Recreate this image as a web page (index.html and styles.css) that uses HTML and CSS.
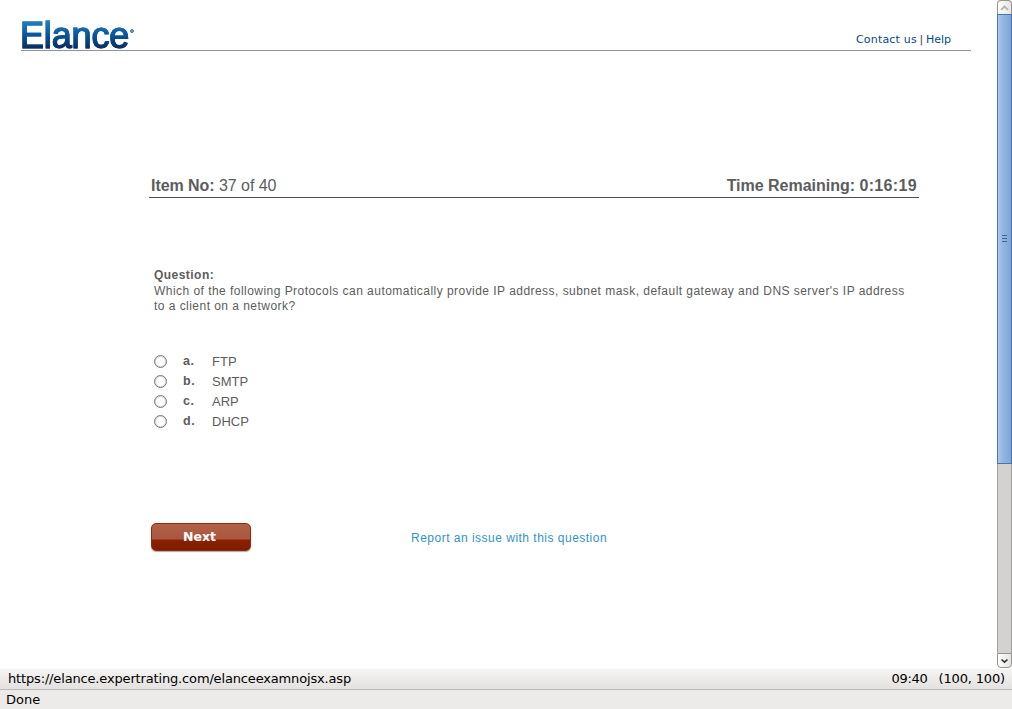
FILE: index.html
```html
<!DOCTYPE html>
<html lang="en">
<head>
<meta charset="utf-8">
<title>Elance</title>
<link rel="stylesheet" href="styles.css">
</head>
<body>
<div class="viewport">
  <main class="page">
    <header class="header">
      <div class="logo"><span class="logo-text">Elance</span><span class="logo-dot"></span></div>
      <nav class="links"><a>Contact us</a><span class="sep">|</span><a class="help">Help</a></nav>
    </header>
    <section class="exam">
      <div class="exam-bar">
        <div class="item"><b>Item No:</b> <span class="count">37 of 40</span></div>
        <div class="time">Time Remaining: <span class="digits">0:16:19</span></div>
      </div>
      <div class="question">
        <div class="q-title">Question:</div>
        <div class="q-line1">Which of the following Protocols can automatically provide IP address, subnet mask, default gateway and DNS server's IP address</div>
        <div class="q-line2">to a client on a network?</div>
      </div>
      <div class="options">
        <label class="option"><span class="radio"></span><b>a.</b><span>FTP</span></label>
        <label class="option"><span class="radio"></span><b>b.</b><span>SMTP</span></label>
        <label class="option"><span class="radio"></span><b>c.</b><span>ARP</span></label>
        <label class="option"><span class="radio"></span><b>d.</b><span>DHCP</span></label>
      </div>
      <div class="actions">
        <button class="next">Next</button>
        <a class="report">Report an issue with this question</a>
      </div>
    </section>
  </main>
  <div class="scrollbar">
    <div class="step step-up"><svg width="9" height="6" viewBox="0 0 9 6"><path d="M1 4.8L4.5 1.5L8 4.8" fill="none" stroke="#b5b3b0" stroke-width="1.8"/></svg></div>
    <div class="thumb"><i></i><i></i><i></i></div>
    <div class="track"></div>
    <div class="step step-down"><svg width="9" height="6" viewBox="0 0 9 6"><path d="M1.5 1.5L4.5 4.2L7.5 1.5" fill="none" stroke="#333" stroke-width="1.6"/></svg></div>
  </div>
</div>
<footer class="status">
  <div class="status-url"><span class="url">https://elance.expertrating.com/elanceexamnojsx.asp</span><span class="clock">09:40</span><span class="coords">(100, 100)</span></div>
  <div class="status-done">Done</div>
</footer>
</body>
</html>
```
FILE: styles.css
```css
* { box-sizing: border-box; }
body {
  margin: 0;
  width: 1012px;
  height: 709px;
  display: flex;
  flex-direction: column;
  overflow: hidden;
  background: #fff;
  font-family: "Liberation Sans", Arial, sans-serif;
  color: #5c5c5d;
}
.viewport { height: 669px; display: flex; }
.page { width: 997px; }
.header {
  margin: 0 26px 0 21px;
  height: 51px;
  border-bottom: 1px solid #929292;
  display: flex;
  justify-content: space-between;
}
.logo { display: flex; padding-top: 15px; }
.logo-text {
  height: 41px;
  margin-left: -2px;
  width: 111px;
  padding-left: 1px;
  font-size: 36px;
  line-height: 42px;
  letter-spacing: -0.15px;
  -webkit-text-stroke: 1.1px #0c4f93;
  -webkit-text-stroke-color: transparent;
  background: linear-gradient(#1a7cc0 8px, #0b559b 20px, #0a2a5e 34px);
  -webkit-background-clip: text;
  background-clip: text;
  color: transparent;
  filter: drop-shadow(0.4px 0 0 #0c4f93);
}
.logo-dot { width: 4px; height: 4px; margin-top: 14px; border: 1px solid #3f76aa; border-radius: 50%; background: #7fa3c6; }
.links {
  padding: 33px 20px 0 0;
  display: flex;
  font: 11px/14px "DejaVu Sans", sans-serif;
  letter-spacing: 0.2px;
  color: #004b8d;
}
.help { letter-spacing: 0; }
.sep { width: 9px; text-align: center; color: #444; }
.exam { margin: 124px 0 0 149px; width: 770px; }
.exam-bar {
  height: 23px;
  padding: 1px 2px 0;
  border-bottom: 1px solid #4a4f52;
  display: flex;
  justify-content: space-between;
  font-size: 16px;
  line-height: 20px;
}
.item { letter-spacing: -0.05px; }
.time { font-weight: bold; letter-spacing: -0.02px; }
.digits { letter-spacing: 0.35px; }
.question { padding: 69px 0 0 5px; font-size: 12px; line-height: 16px; letter-spacing: 0.46px; white-space: nowrap; }
.q-title { font-weight: bold; height: 16px; line-height: 17px; }
.q-line1 { height: 15px; }
.options { margin: 37px 0 0 5px; font-size: 13px; }
.option { height: 20px; display: grid; grid-template-columns: 29px 29px auto; align-items: center; }
.option b { font-size: 12.5px; letter-spacing: 0.5px; }
.radio { width: 13px; height: 13px; border: 1px solid #777; border-radius: 50%; box-shadow: inset 0 0 0 1px #d8d8d8; }
.actions { display: flex; padding: 92px 0 0 2px; }
.next {
  width: 100px;
  height: 28px;
  padding: 0 3px 2px 0;
  border: 1px solid #8c2b0e;
  border-radius: 5px;
  background: linear-gradient(#b26149 0, #a9583f 15px, #8a2100 16px, #7f1c00 100%);
  box-shadow: 0 1px 1px #aaa;
  color: #fff;
  font: bold 12.5px "DejaVu Sans", sans-serif;
}
.report { margin: 7px 0 0 160px; font-size: 12px; line-height: 16px; letter-spacing: 0.49px; color: #2f95c5; }
.scrollbar { width: 15px; height: 668px; display: flex; flex-direction: column; }
.step { display: flex; align-items: center; justify-content: center; border: 1px solid #969492; background: linear-gradient(90deg, #fff, #e6e4e2); }
.step-up { height: 14px; border-bottom: 0; border-radius: 4px 4px 0 0; }
.step-down { height: 15px; border-radius: 0 0 4px 4px; }
.thumb {
  height: 450px;
  padding-bottom: 2px;
  border: 1px solid #4a75a8;
  background: linear-gradient(90deg, #adc9ed, #98b9e4 30%, #7ea3d6);
  display: flex;
  flex-direction: column;
  align-items: center;
  justify-content: center;
  gap: 2px;
}
.thumb i { width: 5px; height: 1px; background: #3d6695; }
.track { flex: 1; border: solid #a09e9c; border-width: 0 1px; background: #d3d2d0; }
.status { font: 13px/17px "DejaVu Sans", sans-serif; color: #000; }
.status-url { height: 21px; padding: 1px 7px 0 8px; display: flex; background: linear-gradient(#f5f4f3, #e3e2e0); border-bottom: 1px solid #bcbbb9; letter-spacing: -0.157px; }
.clock { margin-left: auto; letter-spacing: -0.3px; }
.coords { margin-left: 11px; }
.status-done { height: 19px; padding: 1px 6px; background: #edebe9; }
```
